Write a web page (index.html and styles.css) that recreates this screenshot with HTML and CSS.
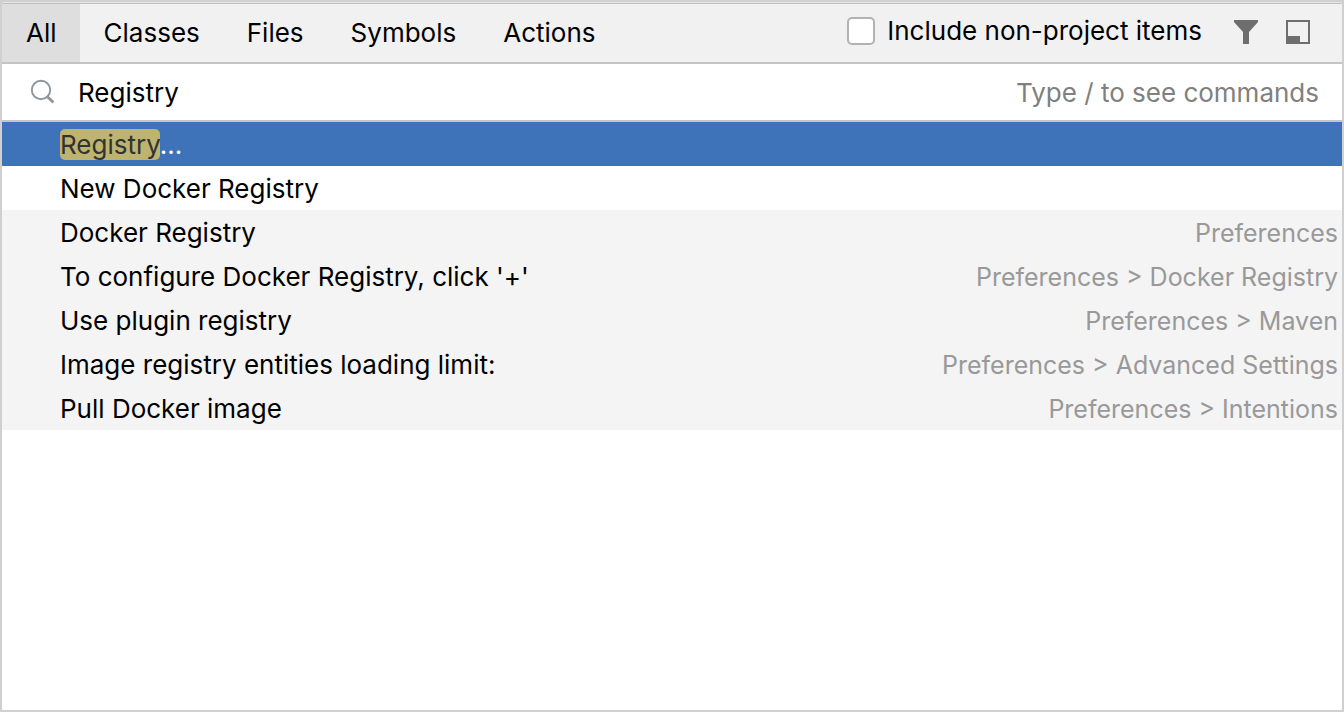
FILE: index.html
```html
<!DOCTYPE html>
<html lang="en">
<head>
<meta charset="utf-8">
<title>Search Everywhere</title>
<link rel="stylesheet" href="styles.css">
</head>
<body>
<main class="popup">
  <header class="toolbar">
    <nav class="tabs">
      <button class="tab tab-active" type="button">All</button>
      <button class="tab" type="button">Classes</button>
      <button class="tab" type="button">Files</button>
      <button class="tab" type="button">Symbols</button>
      <button class="tab" type="button">Actions</button>
    </nav>
    <div class="tools">
      <label class="include"><input class="checkbox" type="checkbox">Include non-project items</label>
      <button class="tool" type="button" aria-label="Filter">
        <svg width="24" height="24" viewBox="0 0 24 24"><path fill="#6e6e6e" d="M0 0h24v2l-9 10v12H9V12L0 2z"/></svg>
      </button>
      <button class="tool" type="button" aria-label="Open in tool window">
        <svg width="24" height="24" viewBox="0 0 24 24"><path fill="#6e6e6e" fill-rule="evenodd" d="M0 0h24v24H0zM2 2v14h12v6h8V2z"/></svg>
      </button>
    </div>
  </header>
  <div class="search">
    <svg class="search-icon" width="26" height="26" viewBox="0 0 26 26" fill="none" stroke="#8d979e"><circle cx="12" cy="11" r="9.2" stroke-width="1.9"/><path stroke-width="2.8" d="M18 17.2l6.4 6.4"/></svg>
    <input class="query" type="text" value="Registry" aria-label="Search">
    <span class="hint">Type / to see commands</span>
  </div>
  <ul class="results">
    <li class="row row-selected"><span><mark class="match">Registry</mark>...</span></li>
    <li class="row"><span>New Docker Registry</span></li>
    <li class="row row-setting"><span>Docker Registry</span><span class="path">Preferences</span></li>
    <li class="row row-setting"><span>To configure Docker Registry, click '+'</span><span class="path">Preferences &gt; Docker Registry</span></li>
    <li class="row row-setting"><span>Use plugin registry</span><span class="path">Preferences &gt; Maven</span></li>
    <li class="row row-setting"><span>Image registry entities loading limit:</span><span class="path">Preferences &gt; Advanced Settings</span></li>
    <li class="row row-setting"><span>Pull Docker image</span><span class="path">Preferences &gt; Intentions</span></li>
  </ul>
</main>
</body>
</html>
```
FILE: styles.css
```css
* {
  box-sizing: border-box;
}

body {
  margin: 0;
  background: #fff;
  color: #000;
  font: 26px/32px Inter, "Liberation Sans", sans-serif;
}

button,
input {
  margin: 0;
  padding: 0;
  border: 0;
  background: none;
  color: inherit;
  font: inherit;
}

.popup {
  min-height: 100vh;
  padding-top: 1px;
  border: 2px solid #d0d0d0;
  background: #fff;
  box-shadow: inset 0 1px #e6e6e6;
}

.toolbar {
  display: flex;
  justify-content: space-between;
  border-top: 1px solid #c0c0c0;
  border-bottom: 2px solid #c4c4c4;
  background: #f1f1f1;
}

.tabs {
  display: flex;
}

.tab {
  height: 58px;
  padding: 0 23px 0 24px;
}

.tab-active {
  background: #dedede;
}

.tools {
  display: flex;
  align-items: center;
  padding: 0 32px 2px 0;
}

.include {
  display: flex;
  align-items: center;
  gap: 12px;
  margin-right: 32px;
  padding-bottom: 2px;
}

.checkbox {
  width: 28px;
  height: 28px;
  appearance: none;
  border: 2px solid #b2b2b2;
  border-radius: 5px;
  background: #fff;
}

.checkbox:checked {
  background: #3e72b9;
}

.tool {
  display: flex;
}

.tool + .tool {
  margin-left: 28px;
}

.search {
  display: flex;
  align-items: center;
  height: 58px;
  padding: 0 23px 0 27px;
  border-bottom: 2px solid #c4c4c4;
}

.search-icon {
  flex: none;
}

.query {
  flex: 1;
  min-width: 0;
  margin-left: 23px;
  padding-top: 2px;
  outline: 0;
}

.hint {
  padding-top: 2px;
  color: #808080;
}

.results {
  margin: 0;
  padding: 0;
  list-style: none;
}

.row {
  display: flex;
  align-items: center;
  justify-content: space-between;
  height: 44px;
  padding: 2px 4px 0 58px;
}

.row-selected {
  background: #3e72b9;
  color: #fff;
}

.row-setting {
  background: #f4f4f4;
}

.match {
  border-radius: 5px;
  background: #bdb470;
  color: #333;
}

.path {
  color: #999;
  font-size: 25px;
}
```
